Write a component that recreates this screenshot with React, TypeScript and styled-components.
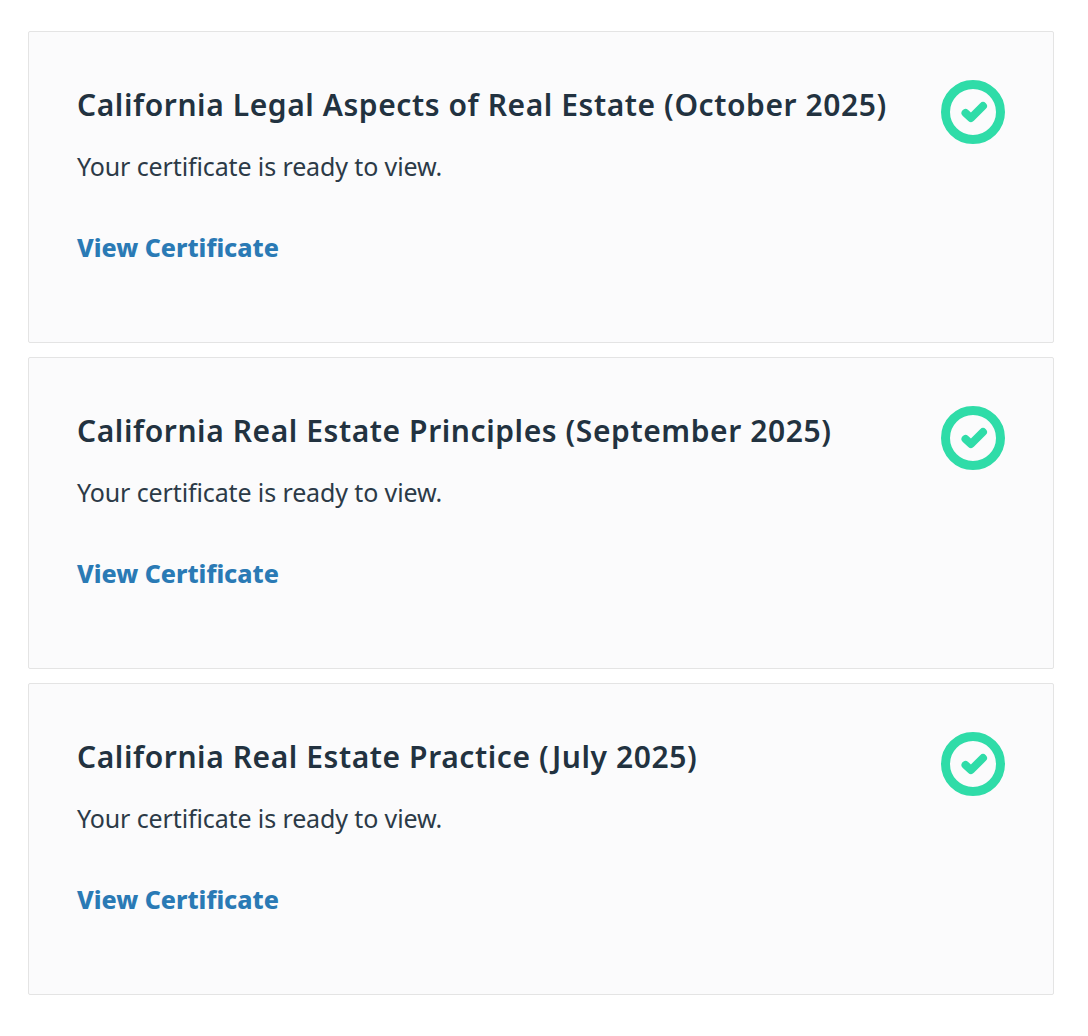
import React from 'react';
import styled, { createGlobalStyle } from 'styled-components';

const GlobalStyle = createGlobalStyle`
  body {
    margin: 0;
    background: #ffffff;
    font-family: "Noto Sans", "Open Sans", sans-serif;
  }
`;

const List = styled.div`
  display: flex;
  flex-direction: column;
  gap: 14px;
  padding: 31px 34px 41px 28px;
`;

const Card = styled.section`
  box-sizing: border-box;
  height: 312px;
  padding: 48px 48px 0 48px;
  display: flex;
  justify-content: space-between;
  align-items: flex-start;
  background: #fbfbfc;
  border: 1px solid #e4e4e4;
  border-radius: 2px;
`;

const Body = styled.div`
  display: flex;
  flex-direction: column;
  align-items: flex-start;
`;

const Title = styled.h2`
  margin: 0;
  font-size: 30px;
  line-height: 50px;
  font-weight: 600;
  letter-spacing: 0.58px;
  color: #223240;
`;

const Message = styled.p`
  margin: 17px 0 0;
  font-size: 25px;
  line-height: 38px;
  font-weight: 400;
  letter-spacing: -0.12px;
  color: #2c3a47;
`;

const ViewLink = styled.a`
  margin-top: 43px;
  font-size: 25px;
  line-height: 38px;
  font-weight: 800;
  color: #2a7ab5;
  text-decoration: none;
`;

const Badge = styled.svg`
  flex: none;
  width: 64px;
  height: 64px;
`;

const CheckBadge: React.FC = () => (
  <Badge viewBox="0 0 64 64" aria-hidden="true">
    <circle cx="32" cy="32" r="27.5" fill="none" stroke="#2fdca8" strokeWidth="9" />
    <path d="M24.5 33l5.5 5 12-12" fill="none" stroke="#2fdca8" strokeWidth="8" strokeLinecap="round" strokeLinejoin="round" />
  </Badge>
);

const courses = [
  'California Legal Aspects of Real Estate (October 2025)',
  'California Real Estate Principles (September 2025)',
  'California Real Estate Practice (July 2025)',
];

const App: React.FC = () => (
  <>
    <GlobalStyle />
    <List>
      {courses.map((course) => (
        <Card key={course}>
          <Body>
            <Title>{course}</Title>
            <Message>Your certificate is ready to view.</Message>
            <ViewLink href="#">View Certificate</ViewLink>
          </Body>
          <CheckBadge />
        </Card>
      ))}
    </List>
  </>
);

export default App;
